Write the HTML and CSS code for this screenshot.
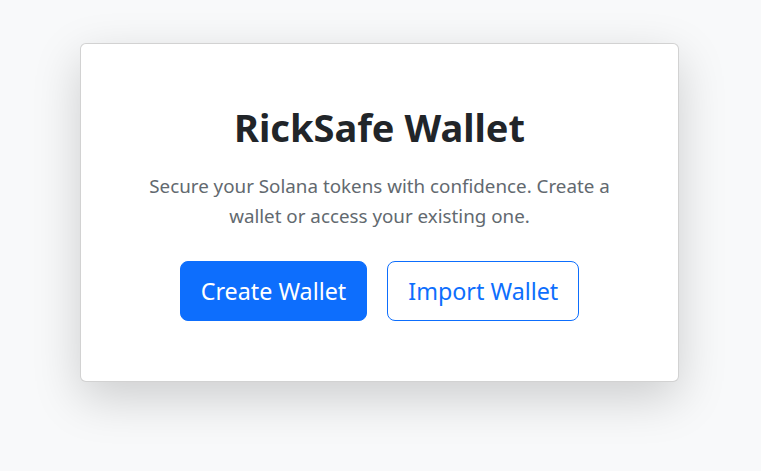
FILE: index.html
```html
<!DOCTYPE html>
<html lang="en">
<head>
<meta charset="utf-8">
<title>RickSafe Wallet</title>
<link rel="stylesheet" href="styles.css">
</head>
<body>
<main class="page">
  <section class="card">
    <h1 class="title">RickSafe Wallet</h1>
    <p class="lead">Secure your Solana tokens with confidence. Create a wallet or access your existing one.</p>
    <div class="actions">
      <button class="btn btn-primary" type="button">Create Wallet</button>
      <button class="btn btn-outline" type="button">Import Wallet</button>
    </div>
  </section>
</main>
</body>
</html>
```
FILE: styles.css
```css
* { box-sizing: border-box; }
html, body { margin: 0; padding: 0; }
body {
  background: #f8f9fa;
  font-family: "Noto Sans", "Open Sans", sans-serif;
  color: #212529;
  min-height: 471px;
}
.page {
  display: flex;
  justify-content: center;
  padding-top: 43px;
}
.card {
  width: 599px;
  margin-left: -2px;
  background: #fff;
  border: 1px solid rgba(0, 0, 0, 0.175);
  border-radius: 6px;
  box-shadow: 0 16px 48px rgba(0, 0, 0, 0.175);
  padding: 59px 40px 60px;
  text-align: center;
}
.title {
  margin: 0 0 20px;
  font-size: 38px;
  font-weight: 700;
  line-height: 48px;
  color: #212529;
}
.lead {
  margin: 0 auto 30px;
  max-width: 480px;
  font-size: 18.8px;
  line-height: 30px;
  color: #62696f;
}
.actions {
  display: flex;
  justify-content: center;
  gap: 20px;
}
.btn {
  font-family: inherit;
  font-size: 23.3px;
  line-height: 36px;
  padding: 11px 20px;
  border-radius: 8px;
  border: 1px solid #0d6efd;
  cursor: pointer;
}
.btn-primary {
  background: #0d6efd;
  color: #fff;
}
.btn-outline {
  background: #fff;
  color: #0d6efd;
}
```
